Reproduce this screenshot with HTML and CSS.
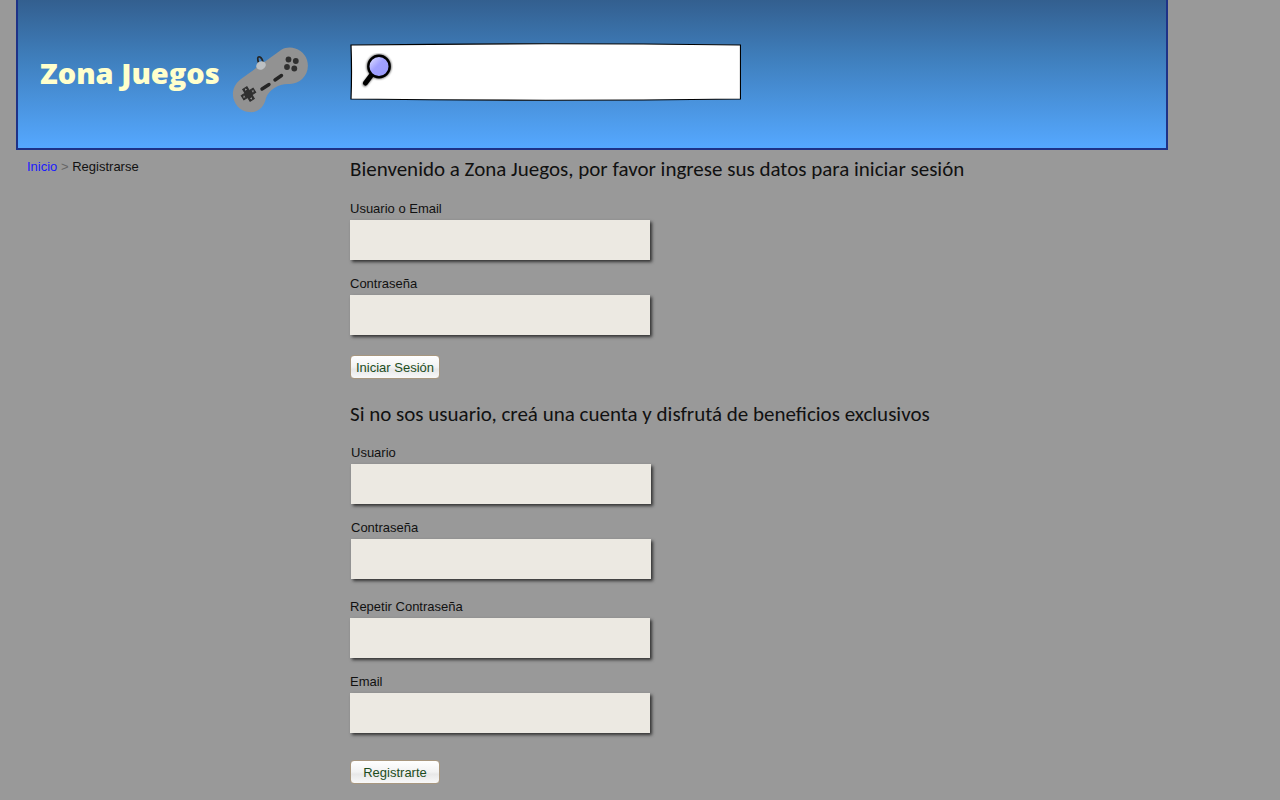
FILE: index.html
```html
<!DOCTYPE html>
<html lang="es">
<head>
<meta charset="utf-8">
<title>Zona Juegos - Registrarse</title>
<link rel="stylesheet" href="styles.css">
</head>
<body>
<header class="banner columns">
  <div class="brand">
    <h1 class="brand-name">Zona Juegos</h1>
    <svg class="gamepad" viewBox="232 46 78 68" aria-hidden="true">
      <path d="M259 64 Q256 56 260 57 Q262 58 263 62" fill="none" stroke="#252525" stroke-width="1.7"/>
      <path d="M241 79 L281 50 C291 44 304 50 307 60 C311 73 301 84 290 84 C280 83 269 89 266 98 C264 108 257 113 249 112 C239 111 232 102 233 92 C234 86 237 82 241 79Z" fill="#929292"/>
      <ellipse cx="261" cy="65.500" rx="5" ry="4" transform="rotate(-25 261 65.5)" fill="#bcc0c3"/>
      <g fill="#303030"><circle cx="288.500" cy="59.500" r="2.900"/><circle cx="295.800" cy="61" r="2.900"/><circle cx="287" cy="67" r="2.900"/><circle cx="294.300" cy="68.500" r="2.900"/></g>
      <path d="M262 89 L269 84.500 M275 80 L281.500 75.500" stroke="#252525" stroke-width="3.400" stroke-linecap="round"/>
      <g transform="rotate(-32 248.500 94)"><path d="M246 87h5v4.500h4.500v5H251v4.500h-5v-4.500h-4.500v-5h4.500z" fill="#303030" stroke="#303030"/><path d="M248.500 87.500l1.300 2h-2.600zM248.500 100.500l1.300-2h-2.600zM242 94l2-1.300v2.600zM255 94l-2-1.300v2.600z" fill="#929292"/></g>
    </svg>
  </div>
  <form class="search" role="search">
    <svg class="search-frame" viewBox="0 0 391 58" preserveAspectRatio="none" aria-hidden="true">
      <path d="M1 2 Q196 -.5 390.500 2 V56 Q196 58.500 1 56 Q2 29 1 2Z" fill="#fff" stroke="#000" stroke-width="1.200"/>
    </svg>
    <svg class="magnifier" viewBox="0 0 32 36" aria-hidden="true">
      <defs>
        <linearGradient id="glass" x1="0" y1="0" x2="1" y2="1"><stop offset=".1" stop-color="#dcdcff"/><stop offset=".45" stop-color="#a0a0ff"/><stop offset="1" stop-color="#9999fa"/></linearGradient>
        <filter id="soft" x="-20%" y="-20%" width="140%" height="140%"><feGaussianBlur stdDeviation="1"/></filter>
      </defs>
      <g filter="url(#soft)" opacity=".6"><circle cx="18" cy="13.500" r="11" fill="none" stroke="#000" stroke-width="3"/><path d="M11 22 L4 31" stroke="#000" stroke-width="5" stroke-linecap="round"/></g>
      <path d="M10.500 22 L4.500 30" stroke="#000" stroke-width="5" stroke-linecap="round"/>
      <circle cx="18" cy="13.500" r="10.700" fill="url(#glass)" stroke="#000" stroke-width="2.400"/>
    </svg>
    <input class="search-input" type="search" aria-label="Buscar">
  </form>
</header>
<div class="page columns">
  <nav class="breadcrumb" aria-label="Ruta"><a href="#">Inicio</a> <span class="separator">&gt;</span> <span>Registrarse</span></nav>
  <main>
    <form class="account-form">
      <h2 class="heading">Bienvenido a Zona Juegos, por favor ingrese sus datos para iniciar sesión</h2>
      <div class="fields">
        <div class="field"><label for="login-user">Usuario o Email</label><input id="login-user" type="text"></div>
        <div class="field"><label for="login-pass">Contraseña</label><input id="login-pass" type="password"></div>
      </div>
      <button class="button" type="button">Iniciar Sesión</button>
    </form>
    <form class="account-form signup">
      <h2 class="heading">Si no sos usuario, creá una cuenta y disfrutá de beneficios exclusivos</h2>
      <div class="fields">
        <div class="fields inset">
          <div class="field"><label for="new-user">Usuario</label><input id="new-user" type="text"></div>
          <div class="field"><label for="new-pass">Contraseña</label><input id="new-pass" type="password"></div>
        </div>
        <div class="field"><label for="repeat-pass">Repetir Contraseña</label><input id="repeat-pass" type="password"></div>
        <div class="field"><label for="email">Email</label><input id="email" type="email"></div>
      </div>
      <button class="button" type="button">Registrarte</button>
    </form>
  </main>
</div>
</body>
</html>
```
FILE: styles.css
```css
* {
  box-sizing: border-box;
}

body {
  margin: 0 0 0 16px;
  background: #999;
  color: #111;
  font: 13px/16px "Liberation Sans", Arial, sans-serif;
}

.columns {
  display: grid;
  grid-template-columns: 334px 1fr;
}

.banner {
  width: 90vw;
  padding: 42px 0 34px;
  border: 2px solid #1e3287;
  border-top: 0;
  background: linear-gradient(#335f8f, #3f7fbd 40%, #55a8ff);
}

.brand {
  display: flex;
  align-items: center;
  justify-content: space-between;
  padding: 4px 42px 0 22px;
}

.brand-name {
  margin: 0;
  padding-bottom: 14px;
  color: #ffc;
  font: 800 29px/36px "Open Sans", "Noto Sans", sans-serif;
  white-space: nowrap;
}

.gamepad {
  flex: none;
  width: 78px;
  height: 68px;
}

.search {
  position: relative;
  display: flex;
  align-items: flex-start;
  width: 391px;
  max-width: 100%;
  height: 58px;
  margin: 1px 0 0 -2px;
  padding: 10px 10px 8px 11px;
}

.search-frame {
  position: absolute;
  inset: 0;
  width: 100%;
  height: 100%;
}

.magnifier {
  position: relative;
  flex: none;
  width: 32px;
  height: 36px;
}

.search-input {
  position: relative;
  flex: 1;
  min-width: 0;
  height: 36px;
  border: 0;
  background: transparent;
  font: inherit;
}

.breadcrumb {
  padding: 9px 11px;
}

.breadcrumb a {
  color: #1a1aff;
  text-decoration: none;
}

.separator {
  color: #666;
}

.account-form {
  padding-top: 7px;
}

.signup {
  padding-top: 23px;
}

.heading {
  margin: 0 0 20px;
  font: 400 21px/24px Carlito, Lato, sans-serif;
}

.signup .heading {
  margin-bottom: 19px;
}

.fields {
  display: grid;
  gap: 16px;
}

.signup > .fields > .inset {
  padding: 0 0 4px 1px;
}

.field {
  display: grid;
  gap: 3px;
  justify-items: start;
}

.field input {
  width: 300px;
  max-width: 100%;
  height: 40px;
  padding: 4px 8px;
  border: 0;
  background: #ece9e2;
  box-shadow: 2px 2px 3px #333;
  font: inherit;
}

.button {
  display: block;
  width: 90px;
  height: 24px;
  margin-top: 20px;
  padding: 2px 0 0;
  border: 1px solid #a8977f;
  border-radius: 4px;
  background: linear-gradient(#fff, #f2f2f2 50%, #e8e8e8 60%, #f8f8f8);
  color: #1d4d1d;
  font: inherit;
}

.signup .button {
  margin-top: 27px;
}
```
